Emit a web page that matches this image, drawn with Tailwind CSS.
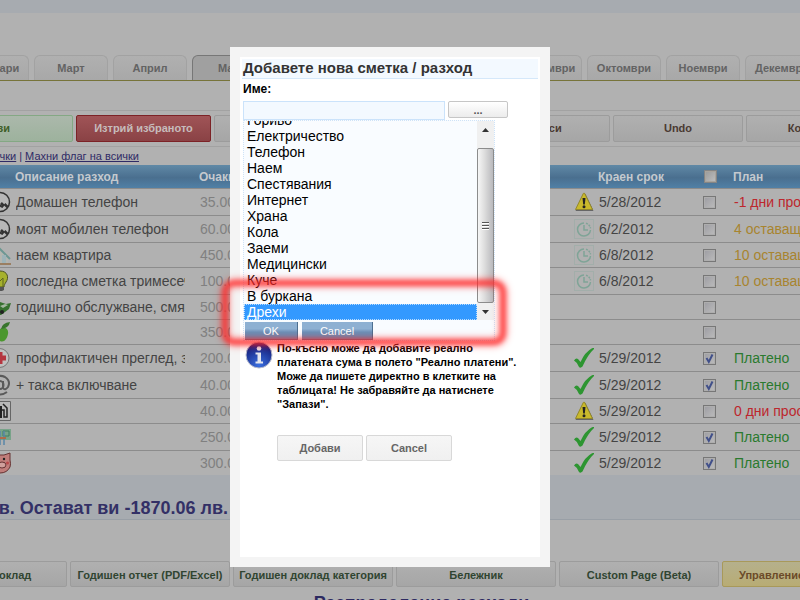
<!DOCTYPE html>
<html lang="bg">
<head>
<meta charset="utf-8">
<title>Семеен бюджет</title>
<script src="https://cdn.jsdelivr.net/npm/@tailwindcss/browser@4"></script>
</head>
<body class="h-screen overflow-hidden bg-[#b1b1b1] font-['Liberation_Sans',Arial,sans-serif] text-[#444]">
<svg class="hidden">
  <symbol id="phone" viewBox="0 0 22 22"><circle cx="11" cy="11" r="9.5" fill="#b8b8b8" stroke="#333" stroke-width="1.5"/><path d="M6 6q0 7 8 10" fill="none" stroke="#333" stroke-width="2"/><path d="M5 5l3 3M12 12l3 3M15.500 13l3 3" stroke="#333" stroke-width="2.500"/></symbol>
  <symbol id="house" viewBox="0 0 22 22"><path d="M2 11v9h17v-9l-8-8z" fill="#b4b6b0"/><path d="M1 9 8 2l13 13" fill="none" stroke="#6d9793" stroke-width="2"/><path d="M13 11h4v8h-4z" fill="#9db3b8"/><path d="M2 20h20" stroke="#9a7f62" stroke-width="2"/></symbol>
  <symbol id="bulb" viewBox="0 0 22 22"><path d="M11 1c8 0 9 7 6 11-1 2-2 3-2 5H8c0-2-2-3-3-5C2 7 4 1 11 1z" fill="#a6b12c" stroke="#4c5220"/><path d="M9 17V9l2 2 3-3v9" fill="none" stroke="#5d6420"/><path d="M8 17h7v3l-2 1h-3z" fill="#555"/></symbol>
  <symbol id="car" viewBox="0 0 22 22"><path d="M1 12l10-6 6 2 5-1-2 6-8 6H5z" fill="#36712f"/><path d="M11 10l5-2 3 1-5 3z" fill="#a4b7a0"/><circle cx="13" cy="16" r="2" fill="#222"/></symbol>
  <symbol id="apple" viewBox="0 0 22 22"><path d="M11 8c5-3 9 0 8 5-1 5-4 9-8 7-5 2-8-3-8-7 0-5 4-7 8-5z" fill="#4b972e"/><path d="M12 8q1-6 9-7-1 6-9 7z" fill="#39752d"/></symbol>
  <symbol id="cross" viewBox="0 0 22 22"><circle cx="10.500" cy="11" r="9.5" fill="#c0c0c0" stroke="#777"/><path d="M8.500 5h5v3.500H17v5h-3.500V17h-5v-3.500H5v-5h3.500z" fill="#b53640"/></symbol>
  <symbol id="at" viewBox="0 0 22 22"><path d="M18 18q-7 5-13 0-6-7-1-13 6-5 12-2 6 4 3 10-3 4-5 1V7" fill="none" stroke="#5a5a5a" stroke-width="2"/><ellipse cx="11" cy="11" rx="3.500" ry="4" fill="none" stroke="#5a5a5a" stroke-width="2"/></symbol>
  <symbol id="fuel" viewBox="0 0 22 22"><path d="M1.500 1.500h20v19h-20z" fill="#b8b8b8" stroke="#666"/><path d="M5 18V6h8v12z" fill="#222"/><path d="M7 8h4v3H7z" fill="#b8b8b8"/><path d="M13 10h2v7h3V8l-4-4" fill="none" stroke="#222" stroke-width="1.500"/></symbol>
  <symbol id="board" viewBox="0 0 22 22"><path d="M2 3h20v11H2z" fill="#78a389"/><path d="M14 5h6v5h-6z" fill="none" stroke="#3f7f60"/><path d="M11 5v14M15 5v14" fill="none" stroke="#5a86a8" stroke-width="1.500"/><path d="M10 12h7" stroke="#b06a4a" stroke-width="2"/></symbol>
  <symbol id="pig" viewBox="0 0 22 22"><path d="M3 5 2 1l6 2h7l6-2v7q1 4 0 7-3 6-10 6Q2 20 2 12z" fill="#c07d7a" stroke="#633" /><ellipse cx="13" cy="13" rx="4" ry="3" fill="#d0a09c" stroke="#633"/><circle cx="15" cy="7" r="1.200" fill="#222"/><circle cx="18.500" cy="11" r="1.500" fill="#b8484a"/></symbol>
  <symbol id="warn" viewBox="0 0 20 20"><path d="M2 18.500 10 2q.5-.8 1 0l8 16.500z" fill="#666" stroke="#666" stroke-linejoin="round"/><path d="M1.500 17.500 9.300 1.500q.7-1 1.400 0l7.800 16z" fill="#c9b92b" stroke="#93882c" stroke-linejoin="round"/><path d="M8.500 6h3l-.7 6.500H9.200z" fill="#222"/><circle cx="10" cy="14.800" r="1.500" fill="#222"/></symbol>
  <symbol id="clock" viewBox="0 0 20 20"><path d="M.5.5h19v19H.5z" fill="none" stroke="#93aba3" stroke-dasharray="1 1"/><path d="M10 4a6.500 6.500 0 1 0 6.500 7" fill="none" stroke="#7fa497" stroke-width="1.500"/><path d="M12 4.300a6.500 6.500 0 0 1 4.500 5" fill="none" stroke="#7fa497" stroke-width="1.500" stroke-dasharray="2 1"/><path d="M10 6v5h4" fill="none" stroke="#7fa497" stroke-width="1.500"/></symbol>
  <symbol id="ok" viewBox="0 0 20 20"><path d="M0 12.500q2-3 4-1.500l2.500 3Q11 4 18 .3q2-.8 2.500.2Q14 6 8.500 18.500q-2 2-3.500.5Q3.500 14.500 0 12.500z" fill="#2d9531"/></symbol>
</svg>

<main class="flex h-full flex-col overflow-hidden">
  <div class="h-[13px] shrink-0 bg-[#a7abb0]"></div>
  <nav class="h-[68px] shrink-0 border-b border-[#77743a] pt-[42px]">
    <ul class="-ml-[45px] flex gap-[5px] text-[11px] font-bold text-[#636363]" id="months"></ul>
  </nav>
  <div class="mt-[29px] shrink-0 border-y border-[#a2a2a2] py-1">
    <div class="-ml-[91px] flex gap-[3px] text-[11px] font-bold text-[#4a3a32]">
      <button class="h-[27px] w-[164px] shrink-0 rounded-xs border border-[#84a884] bg-linear-to-b from-[#abb8ab] to-[#9db29d] text-[#3f5f28]">Запази</button>
      <button class="h-[27px] w-[135px] shrink-0 rounded-xs border border-[#7c2226] bg-linear-to-b from-[#a05457] to-[#8a4245] text-[#c6bcbc]">Изтрий избраното</button>
      <button class="h-[27px] w-[130px] shrink-0 rounded-xs border border-[#9c9c9c] bg-linear-to-b from-[#b0b0b0] to-[#a6a6a6]">Добави</button>
      <button class="h-[27px] w-[130px] shrink-0 rounded-xs border border-[#9c9c9c] bg-linear-to-b from-[#b0b0b0] to-[#a6a6a6]">Изнеси</button>
      <button class="h-[27px] w-[130px] shrink-0 rounded-xs border border-[#9c9c9c] bg-linear-to-b from-[#b0b0b0] to-[#a6a6a6]">Внеси</button>
      <button class="h-[27px] w-[130px] shrink-0 rounded-xs border border-[#9c9c9c] bg-linear-to-b from-[#b0b0b0] to-[#a6a6a6]">Undo</button>
      <button class="h-[27px] w-[130px] shrink-0 rounded-xs border border-[#9c9c9c] bg-linear-to-b from-[#b0b0b0] to-[#a6a6a6]">Копирай</button>
    </div>
  </div>
  <div class="flex h-[18px] w-[139px] shrink-0 items-center justify-end gap-[3px] text-[11px] leading-[14px] whitespace-nowrap text-[#2f2b66]">
    <a href="#" class="underline">Маркирай всички</a><span>|</span><a href="#" class="underline">Махни флаг на всички</a>
  </div>
  <table class="w-full shrink-0 table-fixed border-separate border-spacing-0 text-left text-[14px] whitespace-nowrap">
    <colgroup><col class="w-[15px]"><col class="w-[184px]"><col class="w-[374px]"><col class="w-[25px]"><col class="w-[104px]"><col class="w-[31px]"><col></colgroup>
    <thead>
      <tr class="h-[23px] bg-linear-to-b from-[#6089a6] via-[#4a6f8f] via-55% to-[#5080a6] text-[12px] text-[#c4c9ce]">
        <th></th><th>Описание разход</th><th>Очаквани</th><th></th><th>Краен срок</th>
        <th class="pl-[2px]"><input type="checkbox" aria-label="Избери всички" class="block size-[13px] appearance-none border border-[#858585] bg-linear-to-br from-[#999] to-[#c0c0c0] ring-1 ring-[#a9a49c] ring-inset"></th><th>План</th>
      </tr>
    </thead>
    <tbody id="rows"></tbody>
  </table>
  <div class="h-[45px] w-full shrink-0 border-b border-[#999fa6] bg-[#a7abb0] pt-[22px]">
    <p class="flex w-[228px] justify-end text-[18px] leading-[22px] font-bold whitespace-nowrap text-[#333066]">Разходи 3870.06 лв. Остават ви -1870.06 лв.</p>
  </div>
  <div class="mt-[41px] -ml-[93px] flex shrink-0 gap-[3px] text-[11px] font-bold whitespace-nowrap text-[#304531]" id="reports"></div>
  <h2 class="mt-[5px] w-[843px] shrink-0 text-center text-[18px] leading-[22px] font-bold text-[#2c2960]">Разпределение разходи</h2>
</main>

<div role="dialog" aria-labelledby="dlg" class="absolute top-[47px] left-[230px] w-[320px] bg-[#f4f4f4] p-[10px] text-black">
  <form class="h-[500px] bg-white p-[2px]">
    <h1 id="dlg" class="border-b border-[#d5e8fa] bg-[#f3f9ff] px-px pb-[2px] text-[15px] leading-[17px] font-bold text-[#333]">Добавете нова сметка / разход</h1>
    <label for="name" class="block pb-[2px] pl-px text-[12px] leading-[20px] font-bold">Име:</label>
    <div class="flex items-start gap-[3px] pl-px">
      <input id="name" class="h-[19px] w-[202px] border border-[#cbe3fb] bg-[#f3f9ff] px-1 text-[12px]">
      <button type="button" class="h-[17px] w-[60px] rounded-xs border border-[#c6c6c6] bg-linear-to-b from-white to-[#ececec] text-[11px] leading-[14px] font-bold text-[#555]">...</button>
    </div>
    <div class="ml-px w-[252px] border border-dotted border-[#cfe3f7] bg-[#f9fcff]">
      <div class="flex h-[199px]">
        <div class="flex grow flex-col justify-end overflow-hidden">
          <select size="13" aria-label="Категория" class="block h-[208px] w-full shrink-0 overflow-hidden bg-transparent p-0 text-[14px] outline-none" id="cats"></select>
        </div>
        <div class="flex w-[17px] flex-col items-center bg-[#f0f0f0]" aria-hidden="true">
          <svg class="h-[27px] w-[9px]" viewBox="0 0 9 27"><path d="M1 11h7L4.500 7z" fill="#333"/></svg>
          <div class="flex w-full grow flex-col items-center justify-center gap-px rounded-xs border border-[#8c8c8c] bg-linear-to-r from-[#f6f6f6] via-[#dcdcdc] via-45% to-[#b9b9bd]">
            <i class="h-[2px] w-[7px] border-b border-white bg-[#555]"></i><i class="h-[2px] w-[7px] border-b border-white bg-[#555]"></i><i class="h-[2px] w-[7px] border-b border-white bg-[#555]"></i>
          </div>
          <svg class="h-[17px] w-[9px]" viewBox="0 0 9 17"><path d="M1 7h7L4.500 11z" fill="#333"/></svg>
        </div>
      </div>
      <div class="flex gap-1 px-px pt-[2px] text-[11px] text-white">
        <button type="button" class="h-[18px] w-[53px] border-r border-b border-[#4d6f90] bg-linear-to-b from-[#8eb0d2] from-40% to-[#6a90b8] to-60% pt-[2px] leading-[15px]">OK</button>
        <button type="button" class="h-[18px] w-[71px] border-r border-b border-[#4d6f90] bg-linear-to-b from-[#8eb0d2] from-40% to-[#6a90b8] to-60% pt-[2px] leading-[15px]">Cancel</button>
      </div>
    </div>
    <div class="flex gap-1 pl-[3px]">
      <svg class="size-[28px] shrink-0" viewBox="0 0 28 28" aria-hidden="true"><defs><radialGradient id="g" cx=".5" cy=".9" r=".8"><stop offset="0" stop-color="#3a6fe0"/><stop offset="1" stop-color="#14207e"/></radialGradient></defs><circle cx="14" cy="14" r="13" fill="url(#g)" stroke="#b8bccc"/><circle cx="14" cy="7.500" r="2.300" fill="#e4e6ee"/><path d="M10.500 11.500h5.500v9h2v2h-7.500v-2h2v-7h-2z" fill="#e4e6ee"/></svg>
      <p class="text-[11px] leading-[14px] font-bold whitespace-nowrap">По-късно може да добавите реално<br>платената сума в полето "Реално платени".<br>Може да пишете директно в клетките на<br>таблицата! Не забравяйте да натиснете<br>"Запази".</p>
    </div>
    <div class="mt-6 ml-[35px] flex gap-[3px] text-[11px] font-bold text-[#666]">
      <button type="submit" class="h-[26px] w-[86px] rounded-xs border border-[#d8d8d8] bg-linear-to-b from-[#f6f6f6] to-[#f0f0f0]">Добави</button>
      <button type="button" class="h-[26px] w-[86px] rounded-xs border border-[#d8d8d8] bg-linear-to-b from-[#f6f6f6] to-[#f0f0f0]">Cancel</button>
    </div>
  </form>
</div>
<div class="pointer-events-none absolute top-[280px] left-[222px] h-[65px] w-[284px] rounded-xl border-[6px] border-[#ff2a2a]/80 shadow-[0_0_6px_#ff0000aa,inset_0_0_6px_#ff0000aa] blur-[2px]"></div>

<script>
const fill = (id, items, tpl) => { document.getElementById(id).innerHTML = items.map(tpl).join(''); };

fill('months', ['Февруари','Март','Април','Май','Юни','Юли','Август','Септември','Октомври','Ноември','Декември'], m =>
  `<li class="shrink-0"><a href="#" class="flex h-[25px] w-[74px] items-center justify-center rounded-t-md border border-b-0 ${m === 'Май' ? 'border-[#777] bg-[#a0a0a0]' : 'border-[#a2a2a2] bg-linear-to-b from-[#b0b0b0] to-[#a8a8a8]'}">${m}</a></li>`);

fill('reports', ['Месечен доклад','Годишен отчет (PDF/Excel)','Годишен доклад категория','Бележник','Custom Page (Beta)','Управление на акаунта'], (r, i) =>
  `<button class="h-[26px] w-[160px] shrink-0 rounded-xs border pt-[2px] ${i === 5 ? 'border-[#a8995a] bg-linear-to-b from-[#b5b08c] to-[#b8ac74] text-[#6b4a28]' : 'border-[#9c9c9c] bg-linear-to-b from-[#b0b0b0] to-[#a6a6a6]'}">${r}</button>`);

fill('cats', ['Гориво','Електричество','Телефон','Наем','Спестявания','Интернет','Храна','Кола','Заеми','Медицински','Куче','В буркана','Дрехи'], c =>
  `<option class="h-[16px] min-h-[16px] p-0 pl-[3px] leading-[16px] ${c === 'Дрехи' ? 'bg-linear-to-r from-[#3399ff] to-[#3399ff] text-white outline-1 -outline-offset-1 outline-dotted outline-[#b8dcff]' : ''}" ${c === 'Дрехи' ? 'selected' : ''}>${c}</option>`);

const red = 'text-[#bd272d]', gold = 'text-[#a8842f]', green = 'text-[#2a7a2e]';
const rows = [
  ['phone','Домашен телефон','35.00','warn','5/28/2012',0,'-1 дни просрочени',red,'h-[27px]'],
  ['phone','моят мобилен телефон','60.00','clock','6/2/2012',0,'4 оставащи дни',gold,'h-[27px]'],
  ['house','наем квартира','450.00','clock','6/8/2012',0,'10 оставащи дни',gold,'h-[25px]'],
  ['bulb','последна сметка тримесечие','100.00','clock','6/8/2012',0,'10 оставащи дни',gold,'h-[27px]'],
  ['car','годишно обслужване, смяна','500.00','','',0,'','','h-[25px]'],
  ['apple','','350.00','','',0,'','','h-[25px]'],
  ['cross','профилактичен преглед, зъби','200.00','ok','5/29/2012',1,'Платено',green,'h-[27px]'],
  ['at','+ такса включване','40.00','ok','5/29/2012',1,'Платено',green,'h-[27px]'],
  ['fuel','','40.00','warn','5/29/2012',0,'0 дни просрочени',red,'h-[25px]'],
  ['board','','250.00','ok','5/29/2012',1,'Платено',green,'h-[27px]'],
  ['pig','','300.00','ok','5/29/2012',1,'Платено',green,'h-[25px]'],
];
fill('rows', rows, ([icon, name, sum, st, date, on, plan, color, h]) =>
  `<tr class="${h} *:border-t *:border-[#8c8c8c] *:py-0 *:pr-0 *:pl-px">
    <td><div class="flex w-[10px] justify-end"><svg class="size-[22px] shrink-0"><use href="#${icon}"/></svg></div></td>
    <td><div class="w-[169px] overflow-hidden">${name}</div></td>
    <td class="text-[#808080]">${sum}</td>
    <td>${st ? `<svg class="size-[20px] overflow-visible"><use href="#${st}"/></svg>` : ''}</td>
    <td>${date}</td>
    <td><label class="grid size-[13px]"><input type="checkbox" aria-label="Платено" ${on ? 'checked' : ''} class="col-start-1 row-start-1 size-[13px] appearance-none border border-[#777] bg-linear-to-br from-[#9c9ca2] to-[#bcbcbc] ring-1 ring-[#aeaeae] ring-inset">${on ? '<svg class="pointer-events-none col-start-1 row-start-1 size-[13px]" viewBox="0 0 13 13"><path d="M3.500 6l2.300 4L9.500 2.500" fill="none" stroke="#41508a" stroke-width="2"/></svg>' : ''}</label></td>
    <td class="overflow-hidden ${color}">${plan}</td>
  </tr>`);
</script>
</body>
</html>
